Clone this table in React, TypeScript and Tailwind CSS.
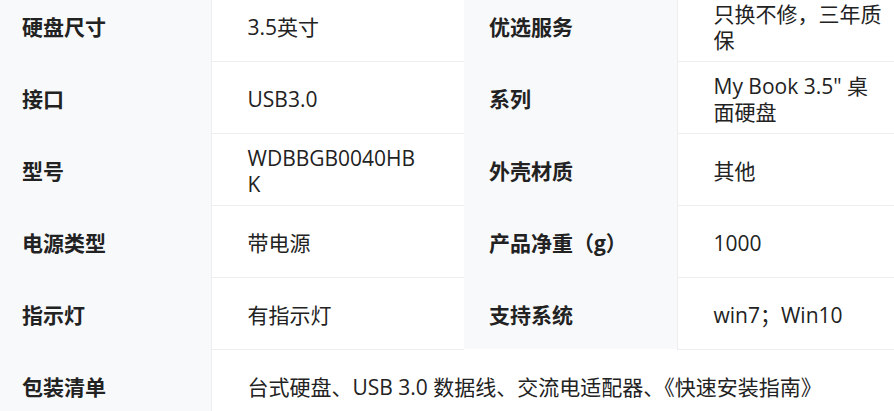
import React from "react";

const rows: [string, React.ReactNode, string, React.ReactNode][] = [
  ["硬盘尺寸", "3.5英寸", "优选服务", <>只换不修，三年质<br />保</>],
  ["接口", "USB3.0", "系列", <>My Book 3.5" 桌<br />面硬盘</>],
  ["型号", <>WDBBGB0040HB<br />K</>, "外壳材质", "其他"],
  ["电源类型", "带电源", "产品净重（g）", "1000"],
  ["指示灯", "有指示灯", "支持系统", "win7；Win10"],
];

const font = { fontFamily: '"Open Sans", "Noto Sans CJK SC", sans-serif' };

function Label({ children }: { children: React.ReactNode }) {
  return (
    <td className="h-[72px] bg-[#f8f9fb] border-r border-[#eeeeee] pl-[25px] pr-4 pt-1 align-middle text-[21px] leading-[27px] font-bold text-[#222222] whitespace-nowrap">
      {children}
    </td>
  );
}

function Value({ children, span }: { children: React.ReactNode; span?: number }) {
  return (
    <td
      colSpan={span}
      className="h-[72px] border-b border-[#eeeeee] pl-9 pr-4 pt-1 align-middle text-[21px] leading-[26px] text-[#222222] whitespace-nowrap"
    >
      {children}
    </td>
  );
}

export default function App() {
  return (
    <div className="w-[894px] h-[411px] overflow-hidden bg-white" style={font}>
      <table className="table-fixed border-collapse w-[933px] -mt-[11px] -ml-[3px]">
        <colgroup>
          <col className="w-[214px]" />
          <col className="w-[253px]" />
          <col className="w-[213px]" />
          <col className="w-[253px]" />
        </colgroup>
        <tbody>
          {rows.map((r) => (
            <tr key={r[0]}>
              <Label>{r[0]}</Label>
              <Value>{r[1]}</Value>
              <Label>{r[2]}</Label>
              <Value>{r[3]}</Value>
            </tr>
          ))}
          <tr>
            <Label>包装清单</Label>
            <Value span={3}>台式硬盘、USB 3.0 数据线、交流电适配器、《快速安装指南》</Value>
          </tr>
        </tbody>
      </table>
    </div>
  );
}
